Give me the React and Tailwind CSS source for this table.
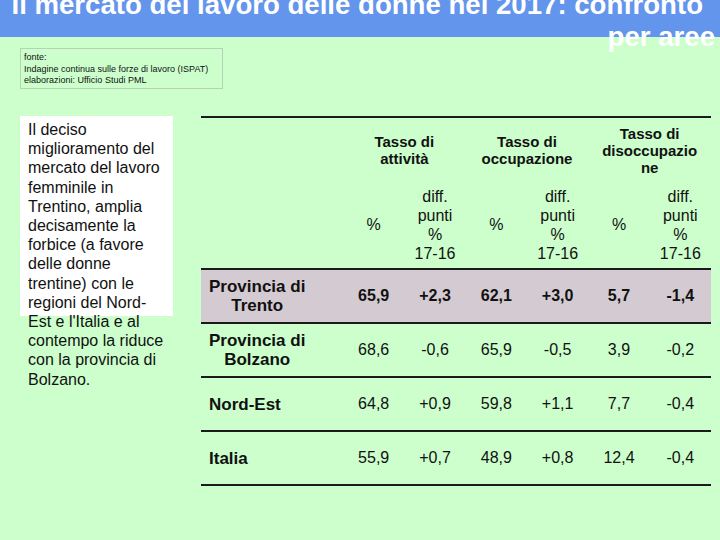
export default function App() {
  const rows = [
    { label: ['Provincia di', 'Trento'], vals: ['65,9', '+2,3', '62,1', '+3,0', '5,7', '-1,4'], hl: true },
    { label: ['Provincia di', 'Bolzano'], vals: ['68,6', '-0,6', '65,9', '-0,5', '3,9', '-0,2'] },
    { label: ['Nord-Est'], vals: ['64,8', '+0,9', '59,8', '+1,1', '7,7', '-0,4'] },
    { label: ['Italia'], vals: ['55,9', '+0,7', '48,9', '+0,8', '12,4', '-0,4'] },
  ];
  const textLines = [
    'Il deciso',
    'miglioramento del',
    'mercato del lavoro',
    'femminile in',
    'Trentino, amplia',
    'decisamente la',
    'forbice (a favore',
    'delle donne',
    'trentine) con le',
    'regioni del Nord-',
    "Est e l'Italia e al",
    'contempo la riduce',
    'con la provincia di',
    'Bolzano.',
  ];
  const diff = (
    <div className="text-center text-[16px] leading-[19px] text-[#111]">
      diff.<br />punti<br />%<br />17-16
    </div>
  );
  return (
    <div className="w-[720px] h-[540px] overflow-hidden bg-[#ccffcc] font-['Liberation_Sans',Arial,sans-serif] text-[#111]">
      {/* Title bar */}
      <div className="flex flex-col h-[37px] bg-[#6495ec]">
        <div className="-mt-[10px] text-right text-white font-bold text-[27.6px] leading-[30px] whitespace-nowrap">
          <div className="pr-[17px]">Il mercato del lavoro delle donne nel 2017: confronto</div>
          <div className="pr-[5px] mt-[2px]">per aree</div>
        </div>
      </div>

      {/* Source box */}
      <div className="ml-[20px] mt-[11px] w-[203px] h-[41px] border border-[#b5d3b5] pl-[3px] pt-[3px] text-[9px] leading-[11.5px] whitespace-nowrap text-[#111]">
        <div>fonte:</div>
        <div>Indagine continua sulle forze di lavoro (ISPAT)</div>
        <div>elaborazioni: Ufficio Studi PML</div>
      </div>

      {/* Main */}
      <div className="flex mt-[27px]">
        <div className="ml-[20px] w-[153px] h-[200px] bg-white pl-[8px] pt-[4px] text-[16px] leading-[19.2px] whitespace-nowrap text-[#111]">
          {textLines.map((l, i) => (
            <div key={i}>{l}</div>
          ))}
        </div>

        <div className="ml-[28px] w-[510px]">
          {/* Header */}
          <div className="grid grid-cols-[142px_repeat(6,1fr)] grid-rows-[64px_86px] h-[154px] border-t-2 border-b-2 border-[#1a1a1a]">
            <div className="col-start-2 col-span-2 flex items-center justify-center text-center font-bold text-[15px] leading-[17px]">
              <div>Tasso di<br />attività</div>
            </div>
            <div className="col-start-4 col-span-2 flex items-center justify-center text-center font-bold text-[15px] leading-[17px]">
              <div>Tasso di<br />occupazione</div>
            </div>
            <div className="col-start-6 col-span-2 flex items-center justify-center text-center font-bold text-[15px] leading-[17px]">
              <div>Tasso di<br />disoccupazio<br />ne</div>
            </div>
            <div className="col-start-2 flex items-center justify-center text-[16px]">%</div>
            <div className="flex items-center justify-center">{diff}</div>
            <div className="flex items-center justify-center text-[16px]">%</div>
            <div className="flex items-center justify-center">{diff}</div>
            <div className="flex items-center justify-center text-[16px]">%</div>
            <div className="flex items-center justify-center">{diff}</div>
          </div>

          {/* Rows */}
          {rows.map((r, i) => (
            <div
              key={i}
              className={
                'grid grid-cols-[142px_repeat(6,1fr)] h-[54px] border-b-2 border-[#1a1a1a] items-center ' +
                (r.hl ? 'bg-[#d4cad1]' : '')
              }
            >
              <div className="pl-[8px] font-bold text-[17px] leading-[19px]">
                <div className="inline-block text-center">
                  {r.label.map((l, j) => (
                    <div key={j}>{l}</div>
                  ))}
                </div>
              </div>
              {r.vals.map((v, j) => (
                <div key={j} className={'text-center text-[16px] ' + (r.hl ? 'font-bold' : '')}>
                  {v}
                </div>
              ))}
            </div>
          ))}
        </div>
      </div>
    </div>
  );
}
